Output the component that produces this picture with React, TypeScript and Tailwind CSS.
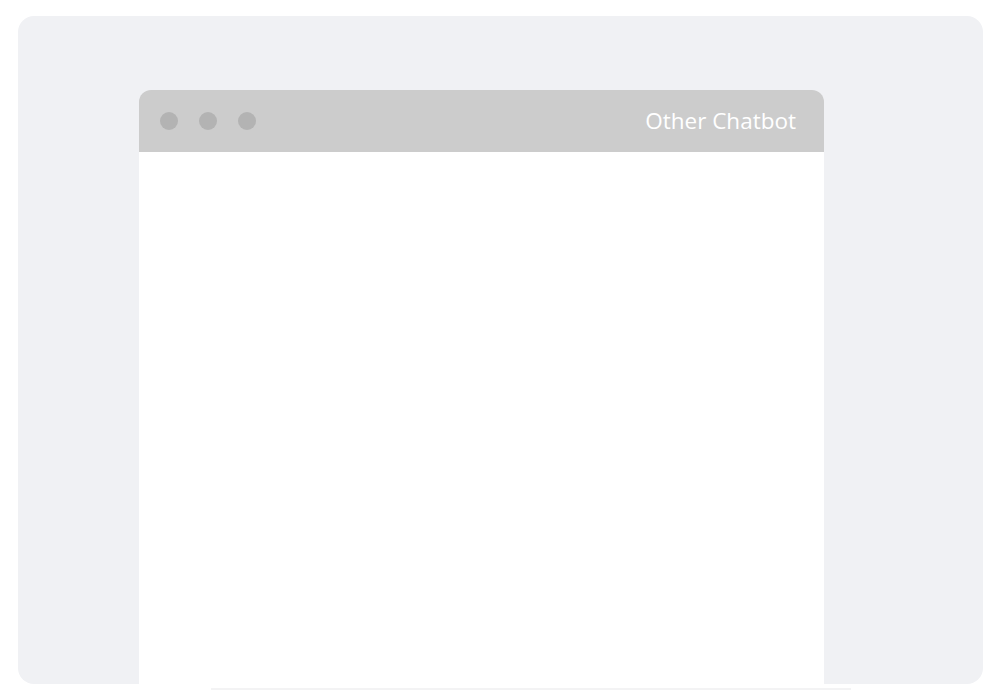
export default function App() {
  return (
    <div className="h-[700px] w-[1000px] overflow-hidden bg-white pt-[16px] pl-[18px] font-['Open_Sans',sans-serif]">
      <div className="h-[668px] w-[965px] rounded-2xl bg-[#f0f1f4] pt-[74px] pl-[121px]">
        <div className="w-[685px]">
          <div className="flex h-[62px] items-center rounded-t-xl bg-[#cccccc] pl-[21px] pr-[28px]">
            <div className="flex gap-[21px]">
              <span className="h-[18px] w-[18px] rounded-full bg-[#b3b3b3]" />
              <span className="h-[18px] w-[18px] rounded-full bg-[#b3b3b3]" />
              <span className="h-[18px] w-[18px] rounded-full bg-[#b3b3b3]" />
            </div>
            <span className="ml-auto text-[22.5px] text-white">Other Chatbot</span>
          </div>
          <div className="h-[532px] bg-white" />
        </div>
      </div>
      <div className="mt-[4px] ml-[193px] h-[2px] w-[640px] bg-[#f3f3f4]" />
    </div>
  );
}
